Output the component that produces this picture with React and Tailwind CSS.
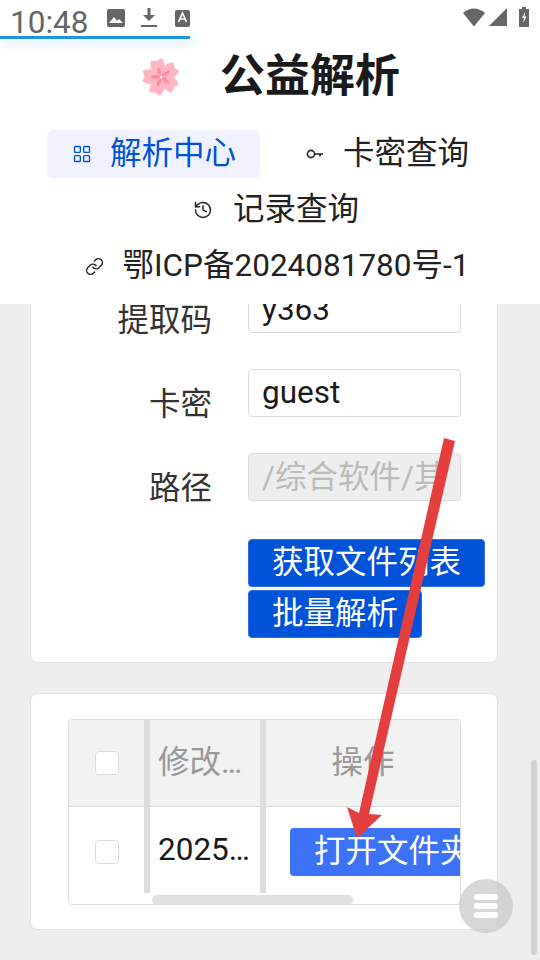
import React from "react";
import { LayoutGrid, History, Link } from "lucide-react";

const font = "font-['Roboto','Noto_Sans_CJK_SC',sans-serif]";

function Flower() {
  const angles = [0, 72, 144, 216, 288];
  return (
    <svg width="40" height="40" viewBox="-1 0 40 40">
      {angles.map((a) => (
        <g key={a} transform={`rotate(${a - 16} 20 20)`}>
          <path d="M20 20C12 16 11 7 15 1.5L20 3.5L25.5 1.5C29 8 27 16 20 20Z" fill="#ffb6c3" />
          <path d="M20 20C17.5 17 17.5 13 20 9.5C22.5 13 22.5 17 20 20Z" fill="#ff8a9e" />
        </g>
      ))}
      <circle cx="20" cy="20" r="1.2" fill="#fff" />
    </svg>
  );
}

function KeyIcon() {
  return (
    <svg width="18" height="18" viewBox="0 0 18 18" fill="none" stroke="#222" strokeWidth="1.6">
      <circle cx="5" cy="9" r="3.6" />
      <path d="M8.6 9H17M14 9V11.5" />
    </svg>
  );
}

function NavItem({ icon, label, active, className }) {
  return (
    <div
      className={`flex h-12 items-center rounded-md pl-6 pr-6 gap-[17px] text-[31.5px] ${
        active ? "bg-[#f0f2ff] text-[#0052d9]" : "text-[#222]"
      } ${className || ""}`}
    >
      <span className="flex w-[22px] justify-center">{icon}</span>
      <span className="whitespace-nowrap">{label}</span>
    </div>
  );
}

function FormRow({ label, children }) {
  return (
    <div className="flex mb-9">
      <div className="h-12 w-[181px] pt-[12px] leading-[48px] text-right text-[31.5px] text-[#333]">{label}</div>
      <div className="ml-[36px]">{children}</div>
    </div>
  );
}

export default function App() {
  return (
    <div className={`relative flex h-[960px] w-[540px] flex-col overflow-hidden bg-[#eeeeee] ${font}`}>
      <header className="relative z-10 h-[304px] bg-white">
        <div className="flex h-[36px] items-center justify-between pl-[10px] pr-[11px] text-[#666]">
          <div className="flex items-center">
            <span className="text-[31.5px] leading-none mt-[10px]">10:48</span>
            <svg className="ml-[19px]" width="18" height="18" viewBox="0 0 18 18">
              <rect width="18" height="18" rx="2" fill="#666" />
              <path d="M2 14L7 8L10 12L12 10L16 14Z" fill="#fff" />
            </svg>
            <svg className="ml-[16px]" width="16" height="20" viewBox="0 0 16 20" fill="#666">
              <path d="M6.5 0H9.5V7H14L8 13L2 7H6.5Z" />
              <rect y="17" width="16" height="2" />
            </svg>
            <svg className="ml-[18px]" width="15" height="17" viewBox="0 0 15 17">
              <rect width="15" height="17" rx="2" fill="#666" />
              <path d="M3.5 12L7.5 3L11.5 12M5 9H10" fill="none" stroke="#fff" strokeWidth="1.6" />
            </svg>
          </div>
          <div className="flex items-center gap-[4px] -mt-[2px]">
            <svg width="22" height="19" viewBox="0 0 22 19" fill="#666">
              <path d="M0 5C6.5-1 15.5-1 22 5L11 18.5Z" />
            </svg>
            <svg width="18" height="18" viewBox="0 0 18 18" fill="#666">
              <path d="M18 0V18H0Z" />
            </svg>
            <svg className="ml-[8px]" width="10" height="20" viewBox="0 0 10 20">
              <path d="M3 0H7V2H10V20H0V2H3Z" fill="#666" />
              <path d="M6 5L3 11H5L4 16L7.5 9.5H5.5Z" fill="#fff" />
            </svg>
          </div>
        </div>
        <div className="flex h-[84px] items-center justify-center gap-10">
          <div className="-mt-[3px]">
            <Flower />
          </div>
          <h1 className="text-[45px] font-bold leading-none text-[#1a1a1a] -mt-[4px]">公益解析</h1>
        </div>
        <nav className="mt-[10px] flex flex-wrap justify-center gap-x-5 gap-y-2">
          <NavItem active label="解析中心" icon={<LayoutGrid size={20} strokeWidth={1.6} />} />
          <NavItem label="卡密查询" icon={<KeyIcon />} />
          <NavItem className="ml-[13px]" label="记录查询" icon={<History className="-translate-x-0.5" size={20} strokeWidth={1.8} />} />
          <NavItem className="ml-[13px]" label="鄂ICP备2024081780号-1" icon={<Link size={19} strokeWidth={1.8} />} />
        </nav>
      </header>

      <main className="flex-1 overflow-hidden px-[30px]">
        <section className="-mt-[20px] w-[468px] rounded-lg border border-[#e4e4e4] bg-white pb-6">
          <FormRow label="提取码">
            <input readOnly value="y363" className="h-12 w-[213px] rounded border border-[#dcdcdc] bg-white px-[13px] text-[31.5px] text-[#1a1a1a] outline-none" />
          </FormRow>
          <FormRow label="卡密">
            <input readOnly value="guest" className="h-12 w-[213px] rounded border border-[#dcdcdc] bg-white px-[13px] pb-[2px] text-[31.5px] text-[#1a1a1a] outline-none" />
          </FormRow>
          <FormRow label="路径">
            <input readOnly value="/综合软件/其他" className="h-12 w-[213px] rounded border border-[#dcdcdc] bg-[#eeeeee] px-[13px] pb-[7px] text-[31.5px] text-[#bbbbbb] outline-none" />
          </FormRow>
          <div className="ml-[217px] mt-[2px] flex flex-col items-start gap-[3px] pt-[2px]">
            <button className="h-12 rounded border border-[#2f6fe4] bg-[#0052d9] px-[23px] text-[31.5px] leading-none text-white">获取文件列表</button>
            <button className="h-12 rounded border border-[#2f6fe4] bg-[#0052d9] px-[23px] text-[31.5px] leading-none text-white">批量解析</button>
          </div>
        </section>

        <section className="mt-[30px] w-[468px] rounded-lg border border-[#e4e4e4] bg-white pl-[37px] pr-9 pt-[25px] pb-6">
          <div className="h-[186px] overflow-hidden rounded border border-[#dddddd]">
            <div className="grid grid-cols-[81px_116px_196px] bg-[#f2f2f2] h-[87px] border-b border-[#dddddd] text-[31.5px] text-[#999999]">
              <div className="flex items-center justify-center border-r-[6px] border-[#dddddd]">
                <span className="h-6 w-6 rounded border border-[#dcdcdc] bg-white" />
              </div>
              <div className="flex items-center border-r-[6px] border-[#dddddd] pl-2 whitespace-nowrap">修改…</div>
              <div className="flex items-center justify-center pr-[2px]">操作</div>
            </div>
            <div className="grid grid-cols-[81px_116px_196px] h-[86px] text-[31.5px] text-[#1a1a1a]">
              <div className="flex items-center justify-center border-r-[6px] border-[#dddddd]">
                <span className="mt-[3px] h-6 w-6 rounded border border-[#dcdcdc] bg-white" />
              </div>
              <div className="flex items-center border-r-[6px] border-[#dddddd] pl-2 whitespace-nowrap">2025…</div>
              <div className="flex items-center overflow-hidden pl-6">
                <button className="mt-[4px] h-12 shrink-0 rounded bg-[#3b72f6] px-6 text-[31.5px] leading-none text-white whitespace-nowrap">打开文件夹</button>
              </div>
            </div>
            <div className="mt-[2px] ml-[83px] h-[10px] w-[201px] rounded-full bg-[#e0e0e0]" />
          </div>
        </section>
      </main>

      {/* page scrollbar, floating button and the red arrow painted over the shot */}
      <div className="absolute right-[3px] top-[760px] h-[195px] w-[6px] rounded-full bg-[#d2d2d2]" />
      <div className="absolute left-[459px] top-[879px] flex h-[54px] w-[54px] flex-col items-center justify-center gap-[3px] rounded-full bg-[#c8c8c8]/70">
        <span className="h-[6px] w-6 rounded-sm bg-white" />
        <span className="h-[6px] w-6 rounded-sm bg-white" />
        <span className="h-[6px] w-6 rounded-sm bg-white" />
      </div>
      <div className="absolute left-0 top-[36px] z-20 h-[3px] w-[190px] bg-[#1e96dc] shadow-[4px_4px_10px_rgba(30,150,220,0.3)]" />
      <svg className="pointer-events-none absolute inset-0 z-20" width="540" height="960">
        <polygon points="444,438 455,441 369,814 382,815 357,838 347,807 359,813" fill="#e53e3e" />
      </svg>
    </div>
  );
}
